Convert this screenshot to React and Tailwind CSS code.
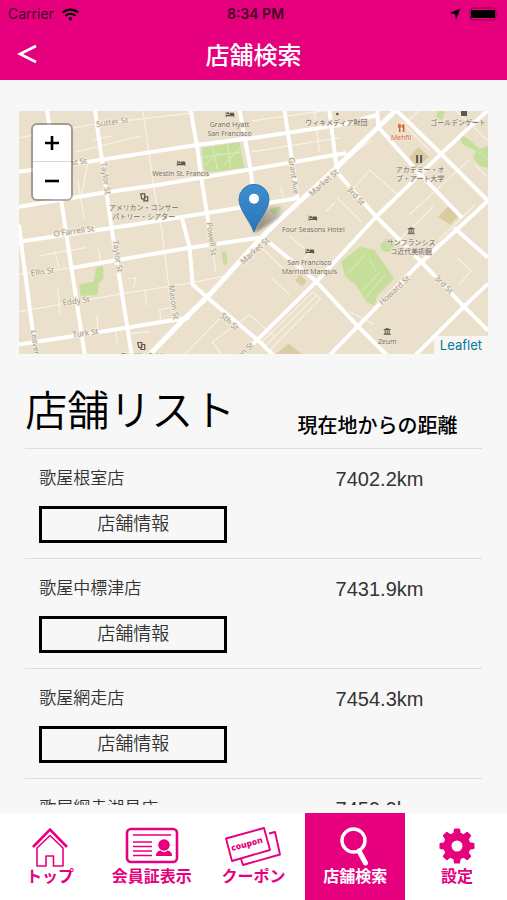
import { FaWifi, FaBed, FaUtensils, FaUniversity } from "react-icons/fa";

const shops = [
  { name: "歌屋根室店", distance: "7402.2km" },
  { name: "歌屋中標津店", distance: "7431.9km" },
  { name: "歌屋網走店", distance: "7454.3km" },
  { name: "歌屋網走湖見店", distance: "7459.9km" },
];

const thinRoads = [
  "M19 138 90 125 192 113",
  "M19 275 73 268",
  "M19 312 123 294 193 283 226 276",
  "M143 110 155 193 162 230 173 318",
  "M210 230 216 272",
  "M78 181 84 218M88 162 82 195M76 152 142 136M93 140 112 136",
  "M40 256 86 248M55 252 59 268M98 248 101 262M58 289 60 315M145 290 147 306",
  "M128 279 136 278 134 288M97 316 98 330M116 332 118 346M130 334 150 332M161 320 160 310 171 308",
  "M252 152 340 138M252 121 330 110M315 113 320 152M281 187 284 198",
  "M370 170 400 196M338 198 362 222M326 212 336 202M352 191 371 170M346 160 372 140",
  "M402 122 430 150M420 110 397 133M410 215 470 160M395 245 434 207M440 240 476 205",
  "M458 258 472 271 460 285M272 278 290 295M262 248 285 270M290 236 310 253 300 266",
  "M262 343 314 292 321 299 270 351ZM266 346 317 296",
  "M185 355 220 319M212 343 250 315 275 337M213 343 222 355M350 312 375 325",
  "M456 110 488 140M476 165 488 177M435 355 445 345",
];

const roads = [
  "M88 162 197 145 260 137 340 125 378 115",
  "M19 172 88 162",
  "M19 207 103 193 153 186 260 168 347 153",
  "M19 242 133 225 240 208 300 198",
  "M73 268 190 248 260 238",
  "M19 345 103 332 190 318",
  "M19 225 22 250 36 356",
  "M47 110 62 205 65 225 85 356",
  "M95 110 112 230 132 356",
  "M191 110 198 150 202 180 210 230",
  "M182 217 190 248 193 285 210 300 260 342 274 356",
  "M240 110 250 163 253 185",
  "M285 110 298 197",
  "M330 110 338 173 377 217 423 263 463 305 489 331",
  "M378 110 379 127 417 170 463 218",
  "M455 228 489 258",
  "M397 110 443 155 489 201 463 225 417 267 330 356",
  "M489 110 443 153 377 217 317 282 252 346",
  "M489 284 467 305 416 356",
  "M262 236 317 282 357 325 388 356",
];

const streetNames = [
  { text: "Sutter St", x: 97, y: 127, angle: -8 },
  { text: "Post St", x: 62, y: 167, angle: -8 },
  { text: "O'Farrell St", x: 54, y: 237, angle: -8 },
  { text: "Ellis St", x: 31, y: 276, angle: -7 },
  { text: "Eddy St", x: 63, y: 306, angle: -8 },
  { text: "Turk St", x: 73, y: 338, angle: -8 },
  { text: "Taylor St", x: 101, y: 163, angle: 82 },
  { text: "Taylor St", x: 113, y: 241, angle: 82 },
  { text: "Leaven", x: 31, y: 331, angle: 82 },
  { text: "Mason St", x: 169, y: 286, angle: 82 },
  { text: "Powell St", x: 207, y: 223, angle: 82 },
  { text: "Grant Ave", x: 289, y: 158, angle: 82 },
  { text: "Market St", x: 313, y: 197, angle: -42 },
  { text: "Market St", x: 244, y: 265, angle: -42 },
  { text: "3rd St", x: 347, y: 190, angle: 47 },
  { text: "3rd St", x: 435, y: 279, angle: 45 },
  { text: "5th St", x: 220, y: 317, angle: 42 },
  { text: "Howard St", x: 383, y: 306, angle: -43 },
  { text: "Mission St", x: 227, y: 372, angle: -43 },
];

const places = [
  { text: "Grand Hyatt", x: 230, y: 127 },
  { text: "San Francisco", x: 230, y: 136 },
  { text: "Westin St. Francis", x: 181, y: 176 },
  { text: "アメリカン・コンサー", x: 144, y: 210 },
  { text: "パトリー・シアター", x: 144, y: 219 },
  { text: "ウィキメディア財団", x: 337, y: 125 },
  { text: "ゴールデンゲート", x: 459, y: 125 },
  { text: "アカデミー・オ", x: 421, y: 172 },
  { text: "ブ・アート大学", x: 421, y: 181 },
  { text: "Four Seasons Hotel", x: 314, y: 232 },
  { text: "San Francisco", x: 310, y: 265 },
  { text: "Marriott Marquis", x: 310, y: 274 },
  { text: "サンフランシス", x: 412, y: 245 },
  { text: "コ近代美術館", x: 412, y: 254 },
  { text: "Zeum", x: 388, y: 345 },
  { text: "The Warfield", x: 142, y: 359 },
];

const StoreMap = () => (
  <svg
    viewBox="19 111 470 244"
    className="block w-full bg-[#eae0cb]"
    role="img"
    aria-label="Map"
    fontFamily="'Open Sans', 'Noto Sans CJK JP', sans-serif"
  >
    <defs>
      <linearGradient id="pin" x1="0" y1="0" x2="0" y2="1">
        <stop offset="0" stopColor="#3d8fd1" />
        <stop offset="1" stopColor="#2b74b5" />
      </linearGradient>
      <linearGradient id="shade" x1="0" y1="1" x2="1" y2="0">
        <stop offset="0" stopColor="#333" stopOpacity="0.65" />
        <stop offset="1" stopColor="#555" stopOpacity="0.1" />
      </linearGradient>
      <filter id="soft">
        <feGaussianBlur stdDeviation="1.5" />
      </filter>
    </defs>
    <g fill="#c5df9b">
      <path d="M202 148 240 142 245 168 205 173Z" />
      <path d="M96 268 103 266 104 278 99 284 98 295 81 297 79 285 94 282Z" />
      <path d="M222 252 227 252 228 263 224 266Z" />
      <path d="M342 262 361 247 375 250 395 279 378 296 375 306 367 302 356 285 346 277Z" />
      <path d="M381 245 387 239 397 244 389 253 382 250Z" />
      <path d="M439 110 446 112 443 120 437 117Z" />
      <path d="M460 134 468 138 481 149 489 146 489 168 481 166 474 158 477 151 463 144Z" />
      <path d="M270 210 282 206 275 216Z" />
    </g>
    <g fill="#dacba2">
      <path d="M419 147 430 157 418 166 410 158Z" />
      <path d="M450 206 462 214 451 225 439 217Z" />
      <path d="M300 275 307 281 303 287 296 281Z" />
      <path d="M289 344 303 355 276 355Z" />
    </g>
    <g fill="none" stroke="#f8f2e3" strokeWidth="1.3">
      {thinRoads.map((d) => (
        <path key={d} d={d} />
      ))}
      <path
        d="M204 157 243 152M213 147 218 170M228 144 231 168M205 165 220 152M224 166 241 147M347 275 367 254M360 294 381 272M365 300 386 275M370 260 377 272M480 152 488 160"
        stroke="#dcebc0"
        strokeWidth="1"
      />
    </g>
    <g fill="none" stroke="#fff" strokeWidth="4" strokeLinejoin="round">
      {roads.map((d) => (
        <path key={d} d={d} />
      ))}
      <path d="M397 110 379 127 340 165 277 223 258 242 210 295 183 321 149 356" strokeWidth="5" />
    </g>
    <g fill="#9a9487" stroke="#f3ecdc" strokeWidth="2" paintOrder="stroke" fontSize="8">
      {streetNames.map(({ text, x, y, angle }) => (
        <text key={`${text}${x}`} transform={`translate(${x} ${y}) rotate(${angle})`}>
          {text}
        </text>
      ))}
    </g>
    <g fill="#6f6862" stroke="#efe7d5" strokeWidth="1.5" paintOrder="stroke" fontSize="7" textAnchor="middle">
      {places.map(({ text, x, y }) => (
        <text key={`${text}${y}`} x={x} y={y}>
          {text}
        </text>
      ))}
      <text x="402" y="140" fill="#dc5a35">
        Mehfil
      </text>
    </g>
    <g color="#5e5650">
      <FaBed x="226" y="110" size="9" />
      <FaBed x="177" y="159" size="9" />
      <FaBed x="309" y="214" size="9" />
      <FaBed x="306" y="247" size="9" />
      <FaUniversity x="408" y="227" size="8" />
      <FaUniversity x="384" y="328" size="8" />
      <FaUtensils x="398" y="124" size="8" color="#dc5a35" />
      <path d="M417 155h2v8h-2zM421 155h2v8h-2zM462 111h6v5h-6z" fill="currentColor" />
      <circle cx="338" cy="114" r="1.3" fill="currentColor" />
      <g fill="none" stroke="currentColor" strokeWidth="1.2">
        <path d="M141 194h4v5h-3zM145 197h3v4h-4zM138 343h4v5h-3zM142 345h3v5h-4z" />
      </g>
    </g>
    <path d="M255 233 263 213Q272 202 281 208 286 215 272 223Z" fill="url(#shade)" filter="url(#soft)" />
    <path
      d="M254.500 232.500C250 220 239.500 210 239.500 199.500A15 15 0 0 1 269.500 199.500C269.500 210 259 220 254.500 232.500Z"
      fill="url(#pin)"
      stroke="#2e75b3"
    />
    <circle cx="254.500" cy="199" r="5" fill="#fff" />
  </svg>
);

const HomeIcon = () => (
  <svg viewBox="0 0 38 42" className="h-[42px] w-[38px]" fill="none" stroke="currentColor">
    <path d="M2 22 19 4.500 36 22" strokeWidth="2.600" />
    <path d="M6 23V41H15V31H22.500V41H32V23L19 10.500Z" strokeWidth="1.600" strokeLinejoin="round" />
  </svg>
);

const MemberIcon = () => (
  <svg viewBox="0 0 54 42" className="h-[42px] w-[54px]" fill="none" stroke="currentColor">
    <rect x="2" y="4" width="50" height="33" rx="4" strokeWidth="2.600" />
    <path d="M8 10H46M8 17H27M8 21.500H27M8 26H27M8 30.500H27" strokeWidth="1.600" />
    <circle cx="39" cy="20" r="5.800" fill="currentColor" stroke="none" />
    <path d="M31 31Q31 26 35.500 25.500Q39 28.500 42.500 25.500Q47 26 47 31Z" fill="currentColor" stroke="none" />
  </svg>
);

const CouponIcon = () => (
  <svg viewBox="0 0 58 42" className="h-[42px] w-[58px]" fill="none" stroke="currentColor" strokeWidth="1.900">
    <path d="M17 34 19 40 56 29.500 51 7 45 8.500" strokeLinejoin="round" />
    <path d="M2 13.500 40 3 46 25 8 36Z" strokeLinejoin="round" />
    <text
      transform="translate(8 26) rotate(-15)"
      fill="currentColor"
      stroke="none"
      fontSize="8.500"
      fontWeight="800"
      fontFamily="'Open Sans', sans-serif"
    >
      coupon
    </text>
  </svg>
);

const SearchIcon = () => (
  <svg viewBox="0 0 30 42" className="h-[42px] w-[30px]" fill="none" stroke="currentColor">
    <circle cx="13.500" cy="15.500" r="11.500" strokeWidth="3.400" />
    <path d="M19 26 25.500 38" strokeWidth="5" strokeLinecap="round" />
  </svg>
);

const toothAngles = [0, 45, 90, 135, 180, 225, 270, 315];

const GearIcon = () => (
  <svg viewBox="0 0 36 36" className="size-9" fill="currentColor">
    <circle cx="18" cy="18" r="9.500" fill="none" stroke="currentColor" strokeWidth="8" />
    {toothAngles.map((angle) => (
      <path key={angle} d="M14 7 15 1Q15 .5 16 .5H20Q21 .5 21 1L22 7Z" transform={`rotate(${angle} 18 18)`} />
    ))}
  </svg>
);

const tabs = [
  { label: "トップ", icon: <HomeIcon /> },
  { label: "会員証表示", icon: <MemberIcon /> },
  { label: "クーポン", icon: <CouponIcon /> },
  { label: "店舗検索", icon: <SearchIcon />, active: true },
  { label: "設定", icon: <GearIcon /> },
];

const App = () => {
  return (
    <div className="flex h-screen flex-col bg-[#f7f7f7] font-['Liberation_Sans','Noto_Sans_CJK_JP',sans-serif]">
      <header className="bg-[#e6007e]">
        <div className="grid grid-cols-3 items-center px-2 pt-1 font-['Inter',sans-serif] text-sm text-[#3d0524]">
          <div className="flex items-center gap-2">
            <span>Carrier</span>
            <FaWifi size={17} className="text-black" />
          </div>
          <span className="pl-1 text-center font-semibold whitespace-nowrap">8:34 PM</span>
          <div className="flex items-center justify-end gap-2 text-black">
            <svg viewBox="0 0 12 12" className="size-3">
              <path d="M11.500 .5 7 11.500 6 6 .5 5Z" />
            </svg>
            <svg viewBox="0 0 30 14" className="h-[14px] w-[30px]">
              <rect x="1" y="1" width="26" height="12" rx="3" fill="none" stroke="#8c0050" />
              <rect x="2" y="3" width="24" height="8" rx="1" />
              <path d="M28.500 5Q30 7 28.500 9Z" fill="#8c0050" />
            </svg>
          </div>
        </div>
        <div className="grid h-14 grid-cols-[1fr_auto_1fr] items-center px-4 pt-2 text-white">
          <button type="button" aria-label="戻る" className="w-6">
            <svg viewBox="0 0 24 24" className="size-6" fill="none" stroke="currentColor" strokeWidth="2.600">
              <path d="M20 2 4 10 20 18" />
            </svg>
          </button>
          <h1 className="text-2xl font-medium">店舗検索</h1>
        </div>
      </header>

      <main className="mb-2 min-h-0 flex-1 overflow-hidden">
        <div className="relative mx-[19px] mt-[31px]">
          <StoreMap />
          <div className="absolute top-3 left-3 flex w-[42px] flex-col rounded-md border-2 border-black/30 bg-white bg-clip-padding">
            <button type="button" aria-label="Zoom in" className="flex h-[37px] items-center justify-center border-b border-gray-300">
              <svg viewBox="0 0 16 16" className="size-4" stroke="#000" strokeWidth="2.600">
                <path d="M1 8H15M8 1V15" />
              </svg>
            </button>
            <button type="button" aria-label="Zoom out" className="flex h-[37px] items-center justify-center">
              <svg viewBox="0 0 16 16" className="size-4" stroke="#000" strokeWidth="2.600">
                <path d="M1 8H15" />
              </svg>
            </button>
          </div>
          <a
            href="#leaflet"
            className="absolute right-0 bottom-0 bg-white/70 px-[6px] font-['Inter',sans-serif] text-[13px] leading-[18px] text-[#0078a8]"
          >
            Leaflet
          </a>
        </div>

        <table className="mx-auto mt-[25px] w-[90%] table-fixed">
          <thead>
            <tr className="h-[69px] border-b border-[#dddddd]">
              <th className="w-[57%] pb-1 text-left align-middle text-[42px] leading-[56px] font-[350] whitespace-nowrap">
                店舗リスト
              </th>
              <th className="pb-2 pl-3 text-left align-bottom text-[20px] leading-7 font-medium whitespace-nowrap">
                現在地からの距離
              </th>
            </tr>
          </thead>
          <tbody>
            {shops.map((shop) => (
              <tr key={shop.name} className="h-[110px] border-b border-[#dddddd] align-top text-[#333]">
                <td className="px-[14px] pt-4">
                  <p className="text-[17px] leading-7 font-[350]">{shop.name}</p>
                  <button
                    type="button"
                    className="mt-[13px] block h-[37px] w-[188px] border-[3px] border-black text-lg leading-7 font-[350]"
                  >
                    店舗情報
                  </button>
                </td>
                <td className="pt-4 pr-2 text-center text-xl leading-7">{shop.distance}</td>
              </tr>
            ))}
          </tbody>
        </table>
      </main>

      <nav className="grid h-[87px] grid-cols-5 gap-[2px] bg-white text-[#e6007e]">
        {tabs.map(({ label, icon, active }) => (
          <a
            key={label}
            href="#tab"
            className={`flex flex-col items-center pt-3 text-base leading-5 font-bold whitespace-nowrap ${
              active ? "bg-[#e6007e] text-white" : ""
            }`}
          >
            <span className="flex h-[42px] items-center">{icon}</span>
            {label}
          </a>
        ))}
      </nav>
    </div>
  );
};

export default App;
